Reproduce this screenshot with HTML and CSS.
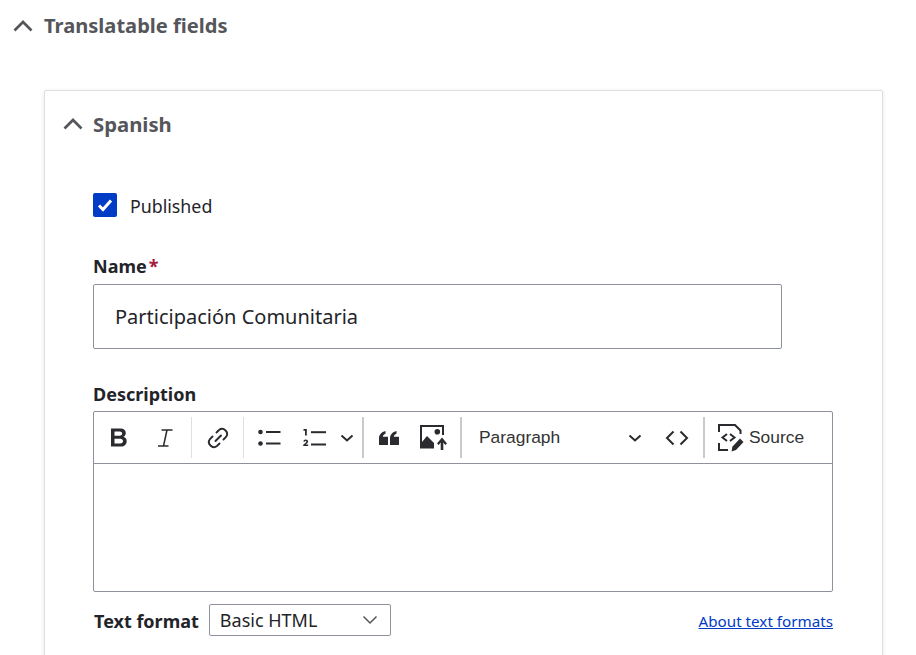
FILE: index.html
```html
<!DOCTYPE html>
<html lang="en">
<head>
<meta charset="utf-8">
<title>Translatable fields</title>
<link rel="stylesheet" href="styles.css">
</head>
<body>
<section class="outer">
  <h2 class="summary outer-summary">
    <svg class="chev" viewBox="0 0 20 12"><path d="M1.500 10.500 10 2l8.500 8.500" fill="none" stroke="#55565b" stroke-width="2.700"/></svg>
    <span>Translatable fields</span>
  </h2>
  <div class="card">
    <h3 class="summary card-summary">
      <svg class="chev" viewBox="0 0 20 12"><path d="M1.500 10.500 10 2l8.500 8.500" fill="none" stroke="#55565b" stroke-width="2.700"/></svg>
      <span>Spanish</span>
    </h3>
    <div class="fields">
      <label class="check-row">
        <span class="checkbox"><svg viewBox="0 0 24 24"><path d="M6 12.500l4 4 8-9" fill="none" stroke="#fff" stroke-width="3"/></svg></span>
        <span class="check-text">Published</span>
      </label>
      <div class="label name-label">Name<span class="req">*</span></div>
      <div class="text-input">Participación Comunitaria</div>
      <div class="label desc-label">Description</div>
      <div class="editor">
        <div class="toolbar">
          <span class="tb tb-b"><svg viewBox="0 0 20 20"><path fill="#2b2b2f" d="M2 0.500h9.500c3.300 0 5.300 1.800 5.300 4.500 0 1.800-.9 3.100-2.400 3.800 2 .6 3.300 2.200 3.300 4.400 0 3-2.200 5.300-5.700 5.300H2zm3.500 3v4.200h5.200c1.500 0 2.500-.8 2.500-2.100s-1-2.100-2.500-2.100zm0 7.200v4.800h5.800c1.600 0 2.700-.9 2.700-2.400s-1.100-2.400-2.700-2.400z"/></svg></span>
          <span class="tb tb-i"><svg viewBox="0 0 20 20"><path fill="none" stroke="#2b2b2f" stroke-width="1.500" d="M6.500 2h11M3 18h10.500M12 2l-3.500 16"/></svg></span>
          <span class="sep"></span>
          <span class="tb tb-link"><svg viewBox="0 0 24 24"><g fill="none" stroke="#2b2b2f" stroke-width="1.900" stroke-linecap="round"><path d="M9.500 15 15 9.500"/><path d="M10.500 6.500 13 4a5 5 0 0 1 7 7l-2.500 2.500"/><path d="M6.500 10.500 4 13a5 5 0 0 0 7 7l2.500-2.500"/></g></svg></span>
          <span class="sep"></span>
          <span class="tb tb-list"><svg viewBox="0 0 24 20"><g fill="#2b2b2f"><circle cx="3.500" cy="4" r="2.300"/><circle cx="3.500" cy="15.500" r="2.300"/><rect x="9" y="3" width="14.500" height="2"/><rect x="9" y="14.500" width="14.500" height="2"/></g></svg></span>
          <span class="tb tb-num"><svg viewBox="0 0 26 20"><g fill="#2b2b2f"><rect x="9" y="3.200" width="15" height="2"/><rect x="9" y="15.500" width="15" height="2"/><path d="M1.500 1h3.300v6.500H3V2.700H1.500z"/><path d="M1.300 13.500c.2-1.300 1.100-2 2.400-2 1.400 0 2.400.8 2.400 2 0 1-.6 1.600-1.400 2.200l-1.100.8h2.600V18H1.200v-1.300l2.500-2c.5-.4.700-.7.700-1.100s-.3-.7-.8-.7-.8.300-.9.800z"/></g></svg></span>
          <span class="tb tb-caret"><svg viewBox="0 0 14 8"><path d="M1.500 1.500 7 6.500l5.500-5" fill="none" stroke="#2b2b2f" stroke-width="2"/></svg></span>
          <span class="sep sep-strong"></span>
          <span class="tb tb-quote"><svg viewBox="0 0 22 18"><path fill="#2b2b2f" d="M1 9.500C1 5.500 3.500 3 7.500 2v2.700C5.800 5.400 5 6.300 4.800 7.800H10V16H1zM12 9.500c0-4 2.500-6.500 6.500-7.500v2.700c-1.700.7-2.500 1.600-2.700 3.100H21V16h-9z"/></svg></span>
          <span class="tb tb-img"><svg viewBox="0 0 27 25"><g fill="#2b2b2f"><path d="M0 0h24v10h-2V2H2v19h12v2.500H0z"/><circle cx="17.300" cy="6.700" r="2.800"/><path d="M2 23v-6l5-6 7 7v5z"/><path d="M22 12.500l5 6-1.700 1.400-2-2.400V25h-2.600v-7.500l-2 2.400-1.700-1.400z"/></g></svg></span>
          <span class="sep sep-strong"></span>
          <span class="dropdown">Paragraph<svg class="dd-caret" viewBox="0 0 14 8"><path d="M1.500 1.500 7 6.500l5.500-5" fill="none" stroke="#2b2b2f" stroke-width="2"/></svg></span>
          <span class="tb tb-code"><svg viewBox="0 0 24 16"><path d="M8.500 1.500 2 8l6.500 6.500M15.500 1.500 22 8l-6.500 6.500" fill="none" stroke="#2b2b2f" stroke-width="2"/></svg></span>
          <span class="sep sep-strong"></span>
          <span class="source">
            <svg viewBox="0 0 26 28"><g fill="none" stroke="#2b2b2f" stroke-width="2"><path d="M1 8V1h16l5.500 5.500V10"/><path d="M1 19v7h9"/><path d="M9 10 4.500 13.500 9 17"/><path d="M12 10l4.500 3.500L12 17"/></g><path fill="#2b2b2f" d="M13.500 27.500l1-5 7.500-8 3.500 3.500-7.500 8z"/></svg>
            <span>Source</span>
          </span>
        </div>
        <div class="edit-area"></div>
      </div>
      <div class="format-row">
        <span class="format-label">Text format</span>
        <span class="select">Basic HTML<svg viewBox="0 0 16 10"><path d="M1.500 1.500 8 8l6.500-6.500" fill="none" stroke="#55565b" stroke-width="1.500"/></svg></span>
        <a class="about" href="#">About text formats</a>
      </div>
    </div>
  </div>
</section>
</body>
</html>
```
FILE: styles.css
```css
html, body {
  margin: 0;
  padding: 0;
  height: 655px;
  overflow: hidden;
  background: #fff;
}
body {
  font-family: "Noto Sans", "Open Sans", sans-serif;
  color: #232429;
  font-size: 18px;
}
.outer {
  padding: 0 33px 0 13px;
}
.summary {
  display: flex;
  align-items: center;
  margin: 0;
  font-weight: 700;
  color: #55565b;
  font-size: 20.100px;
  line-height: 26px;
}
.chev {
  width: 20px;
  height: 12px;
  flex: none;
  margin-right: 11px;
}
.outer-summary {
  padding-top: 13px;
  height: 39px;
  box-sizing: border-box;
}
.card {
  margin: 51px 0 0 31px;
  border: 1px solid #dedfe4;
  border-radius: 2px;
  box-shadow: 0 1px 4px rgba(0, 0, 0, .1);
  padding: 0 49px 0 18px;
  height: 640px;
}
.card-summary {
  padding-top: 19px;
  height: 46px;
  box-sizing: border-box;
  font-size: 20.300px;
}
.card-summary .chev {
  margin-right: 10px;
}
.fields {
  padding: 0 0 0 30px;
}
.check-row {
  display: flex;
  align-items: center;
  margin-top: 56px;
  height: 24px;
  font-size: 17.800px;
}
.checkbox {
  width: 24px;
  height: 24px;
  background: #003cc5;
  border-radius: 2px;
  margin-right: 13px;
  display: block;
}
.checkbox svg {
  display: block;
  width: 24px;
  height: 24px;
}
.check-text {
  padding-top: 2px;
}
.label {
  font-weight: 700;
  color: #232429;
  font-size: 18px;
  line-height: 24px;
}
.name-label {
  margin-top: 37px;
}
.req {
  color: #a51b42;
  margin-left: 2px;
}
.text-input {
  box-sizing: border-box;
  width: 689px;
  height: 65px;
  margin-top: 6px;
  border: 1px solid #8e929c;
  border-radius: 2px;
  padding: 0 21px;
  font-size: 20px;
  line-height: 63px;
  color: #232429;
}
.desc-label {
  margin-top: 33px;
}
.editor {
  box-sizing: border-box;
  width: 740px;
  margin-top: 5px;
  border: 1px solid #8e929c;
  border-radius: 2px;
  height: 181px;
}
.toolbar {
  display: flex;
  align-items: center;
  height: 51px;
  border-bottom: 1px solid #8e929c;
  padding-left: 15px;
}
.tb {
  display: flex;
  flex: none;
}
.tb svg {
  display: block;
  width: 100%;
  height: 100%;
}
.sep {
  flex: none;
  width: 1px;
  height: 41px;
  background: #dedfe4;
}
.sep-strong {
  width: 2px;
  background: #c9cad0;
}
.tb-b { width: 20px; height: 20px; }
.tb-i { width: 20px; height: 20px; margin-left: 26px; margin-right: 16px; }
.tb-link { width: 24px; height: 24px; margin: 0 13px 0 14px; }
.tb-list { width: 24px; height: 20px; margin-left: 13px; }
.tb-num { width: 26px; height: 20px; margin-left: 21px; }
.tb-caret { width: 14px; height: 8px; margin: 0 8px 0 12px; }
.tb-quote { width: 22px; height: 18px; margin-left: 14px; }
.tb-img { width: 27px; height: 25px; margin: 0 13px 0 20px; }
.dropdown {
  display: flex;
  align-items: center;
  flex: none;
  width: 180px;
  padding-left: 17px;
  box-sizing: border-box;
  font-family: "Liberation Sans", Arial, sans-serif;
  font-size: 17.400px;
  color: #333;
}
.dd-caret {
  width: 14px;
  height: 8px;
  margin-left: auto;
}
.tb-code { width: 24px; height: 16px; margin: 0 14px 0 23px; }
.source {
  display: flex;
  align-items: center;
  flex: none;
  font-family: "Liberation Sans", Arial, sans-serif;
  font-size: 17.400px;
  color: #333;
  margin-left: 13px;
}
.source svg {
  width: 26px;
  height: 28px;
  margin-right: 5px;
}
.edit-area {
  height: 128px;
}
.format-row {
  display: flex;
  align-items: center;
  width: 740px;
  margin-top: 12px;
  height: 32px;
}
.format-label {
  font-weight: 700;
  font-size: 18px;
  color: #232429;
  padding: 2px 0 0 1px;
}
.select {
  display: flex;
  align-items: center;
  justify-content: space-between;
  box-sizing: border-box;
  width: 182px;
  height: 32px;
  margin-left: 10px;
  padding: 0 12px 0 10px;
  border: 1px solid #8e929c;
  border-radius: 2px;
  font-size: 18px;
}
.select svg {
  width: 16px;
  height: 10px;
}
.about {
  margin-left: auto;
  padding-top: 2px;
  font-size: 15.200px;
  color: #003cc5;
  text-decoration: underline;
}
```
